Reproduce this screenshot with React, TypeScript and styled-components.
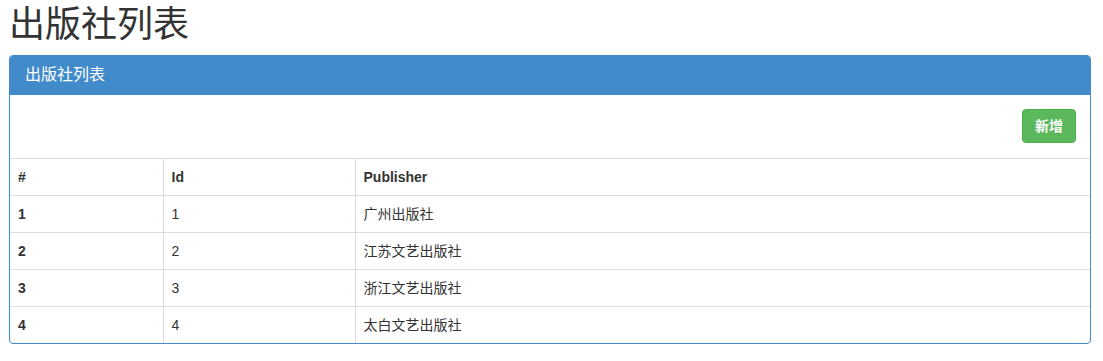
import styled, { createGlobalStyle } from "styled-components";

const GlobalStyle = createGlobalStyle`
  body {
    margin: 0;
    background: #fff;
    color: #333;
    font-family: "Liberation Sans", "Noto Sans CJK SC", sans-serif;
    font-size: 14px;
    line-height: 1.42857;
  }
  * {
    box-sizing: border-box;
  }
`;

const Page = styled.div`
  padding: 5px 12px 0 9px;
`;

const Title = styled.h1`
  margin: 0 0 10px 0;
  font-size: 36px;
  font-weight: 400;
  line-height: 40px;
  color: #333;
`;

const Panel = styled.div`
  border: 1px solid #428bca;
  border-radius: 4px;
  background: #fff;
  overflow: hidden;
`;

const PanelHeading = styled.div`
  background: #428bca;
  color: #fff;
  padding: 9px 15px 10px;
  font-size: 16px;
  line-height: 20px;
`;

const PanelBody = styled.div`
  padding: 14px 14px 15px 15px;
  display: flex;
  justify-content: flex-end;
`;

const Button = styled.button<{ $variant?: "success" }>`
  background: #5cb85c;
  border: 1px solid #4cae4c;
  border-radius: 4px;
  color: #fff;
  font-family: inherit;
  font-size: 14px;
  font-weight: bold;
  line-height: 20px;
  padding: 6px 12px;
  height: 34px;
  cursor: pointer;
`;

const Table = styled.table`
  width: 100%;
  border-collapse: collapse;
  border-spacing: 0;
`;

const Cell = styled.td<{ $bold?: boolean; $width?: number }>`
  padding: 8px;
  line-height: 20px;
  border-top: 1px solid #ddd;
  border-left: 1px solid #ddd;
  text-align: left;
  vertical-align: top;
  font-weight: ${(p) => (p.$bold ? "bold" : "normal")};
  width: ${(p) => (p.$width ? `${p.$width}px` : "auto")};
  font-size: 14px;
  color: #333;
  &:first-child {
    border-left: none;
  }
`;

const publishers = [
  { id: 1, name: "广州出版社" },
  { id: 2, name: "江苏文艺出版社" },
  { id: 3, name: "浙江文艺出版社" },
  { id: 4, name: "太白文艺出版社" },
];

export default function App() {
  return (
    <Page>
      <GlobalStyle />
      <Title>出版社列表</Title>
      <Panel>
        <PanelHeading>出版社列表</PanelHeading>
        <PanelBody>
          <Button $variant="success">新增</Button>
        </PanelBody>
        <Table>
          <thead>
            <tr>
              <Cell as="th" $bold $width={153}>#</Cell>
              <Cell as="th" $bold $width={192}>Id</Cell>
              <Cell as="th" $bold>Publisher</Cell>
            </tr>
          </thead>
          <tbody>
            {publishers.map((p, i) => (
              <tr key={p.id}>
                <Cell as="th" $bold>{i + 1}</Cell>
                <Cell>{p.id}</Cell>
                <Cell>{p.name}</Cell>
              </tr>
            ))}
          </tbody>
        </Table>
      </Panel>
    </Page>
  );
}
